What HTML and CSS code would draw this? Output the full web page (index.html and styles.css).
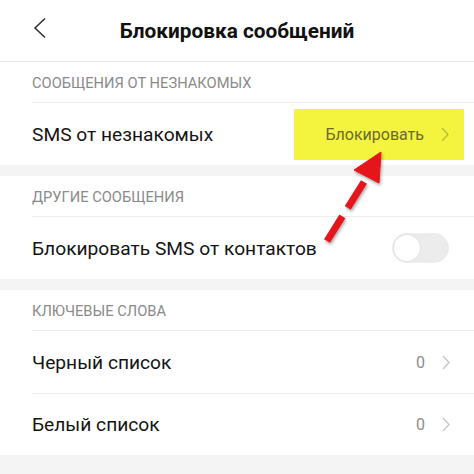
FILE: index.html
```html
<!DOCTYPE html>
<html lang="ru">
<head>
<meta charset="utf-8">
<link rel="stylesheet" href="styles.css">
</head>
<body>
<div class="screen">
  <header class="topbar">
    <svg class="back" width="14" height="22" viewBox="0 0 14 22"><path d="M12 1.5 L2 11 L12 20.5" fill="none" stroke="#333" stroke-width="1.6"/></svg>
    <h1 class="title">Блокировка сообщений</h1>
  </header>

  <section class="group">
    <div class="label">СООБЩЕНИЯ ОТ НЕЗНАКОМЫХ</div>
    <div class="row">
      <span class="row-text">SMS от незнакомых</span>
      <span class="value highlight">Блокировать
        <svg class="chev" width="8" height="15" viewBox="0 0 8 15"><path d="M1 1 L7 7.5 L1 14" fill="none" stroke="#b9b944" stroke-width="1.3"/></svg>
      </span>
    </div>
  </section>

  <section class="group">
    <div class="label">ДРУГИЕ СООБЩЕНИЯ</div>
    <div class="row">
      <span class="row-text">Блокировать SMS от контактов</span>
      <span class="toggle"><span class="knob"></span></span>
    </div>
  </section>

  <section class="group">
    <div class="label">КЛЮЧЕВЫЕ СЛОВА</div>
    <div class="row">
      <span class="row-text">Черный список</span>
      <span class="value">0
        <svg class="chev" width="8" height="15" viewBox="0 0 8 15"><path d="M1 1 L7 7.5 L1 14" fill="none" stroke="#c4c4c4" stroke-width="1.3"/></svg>
      </span>
    </div>
    <div class="row">
      <span class="row-text">Белый список</span>
      <span class="value">0
        <svg class="chev" width="8" height="15" viewBox="0 0 8 15"><path d="M1 1 L7 7.5 L1 14" fill="none" stroke="#c4c4c4" stroke-width="1.3"/></svg>
      </span>
    </div>
  </section>

  <svg class="arrow" width="474" height="474" viewBox="0 0 474 474">
    <defs>
      <filter id="sh" x="-20%" y="-20%" width="140%" height="140%">
        <feDropShadow dx="1" dy="2" stdDeviation="1.5" flood-color="#000" flood-opacity="0.35"/>
      </filter>
    </defs>
    <g filter="url(#sh)" fill="#e4141c" stroke="#e4141c">
      <line x1="327" y1="241" x2="364" y2="182" stroke-width="7" stroke-dasharray="29 10 31"/>
      <polygon points="381,152 354,170 379,183" stroke-width="1" stroke-linejoin="round"/>
    </g>
  </svg>
</div>
</body>
</html>
```

FILE: styles.css
```css
* { box-sizing: border-box; }
html, body { margin: 0; padding: 0; background: #f4f4f4; }
.screen {
  position: relative;
  width: 474px;
  height: 474px;
  overflow: hidden;
  background: #f4f4f4;
  font-family: Roboto, "Noto Sans", sans-serif;
  color: #161616;
}
.topbar {
  position: relative;
  height: 62px;
  background: #fff;
  border-bottom: 1px solid #e8e8e8;
  display: flex;
  align-items: center;
  justify-content: center;
}
.back {
  position: absolute;
  left: 33px;
  top: 17px;
}
.title {
  margin: 0;
  font-size: 20.8px;
  font-weight: 700;
  color: #111;
  letter-spacing: 0;
}
.group {
  background: #fff;
  padding-left: 32px;
  margin-bottom: 11px;
}
.label {
  height: 41px;
  display: flex;
  align-items: center;
  padding-top: 1px;
  font-size: 14.7px;
  color: #8a8a8a;
  border-bottom: 1px solid #ececec;
}
.row {
  height: 62px;
  display: flex;
  align-items: center;
  justify-content: space-between;
  padding-right: 24px;
}
.row + .row { border-top: 1px solid #ececec; }
.row-text {
  font-size: 19.2px;
  color: #141414;
}
.value {
  display: flex;
  align-items: center;
  gap: 17px;
  font-size: 16px;
  color: #8c8c8c;
}
.highlight {
  background: #f4f43e;
  color: #6a6a2c;
  height: 51px;
  padding: 0 15px 0 31px;
  margin-right: -14px;
}
.chev { display: block; }
.toggle {
  width: 57px;
  height: 30px;
  border-radius: 15px;
  background: #ececec;
  display: flex;
  align-items: center;
  padding-left: 2px;
  margin-right: 1px;
}
.knob {
  width: 26px;
  height: 26px;
  border-radius: 50%;
  background: #fff;
  box-shadow: 0 0 0 1px #e2e2e2;
}
.arrow {
  position: absolute;
  left: 0;
  top: 0;
  pointer-events: none;
}
```
